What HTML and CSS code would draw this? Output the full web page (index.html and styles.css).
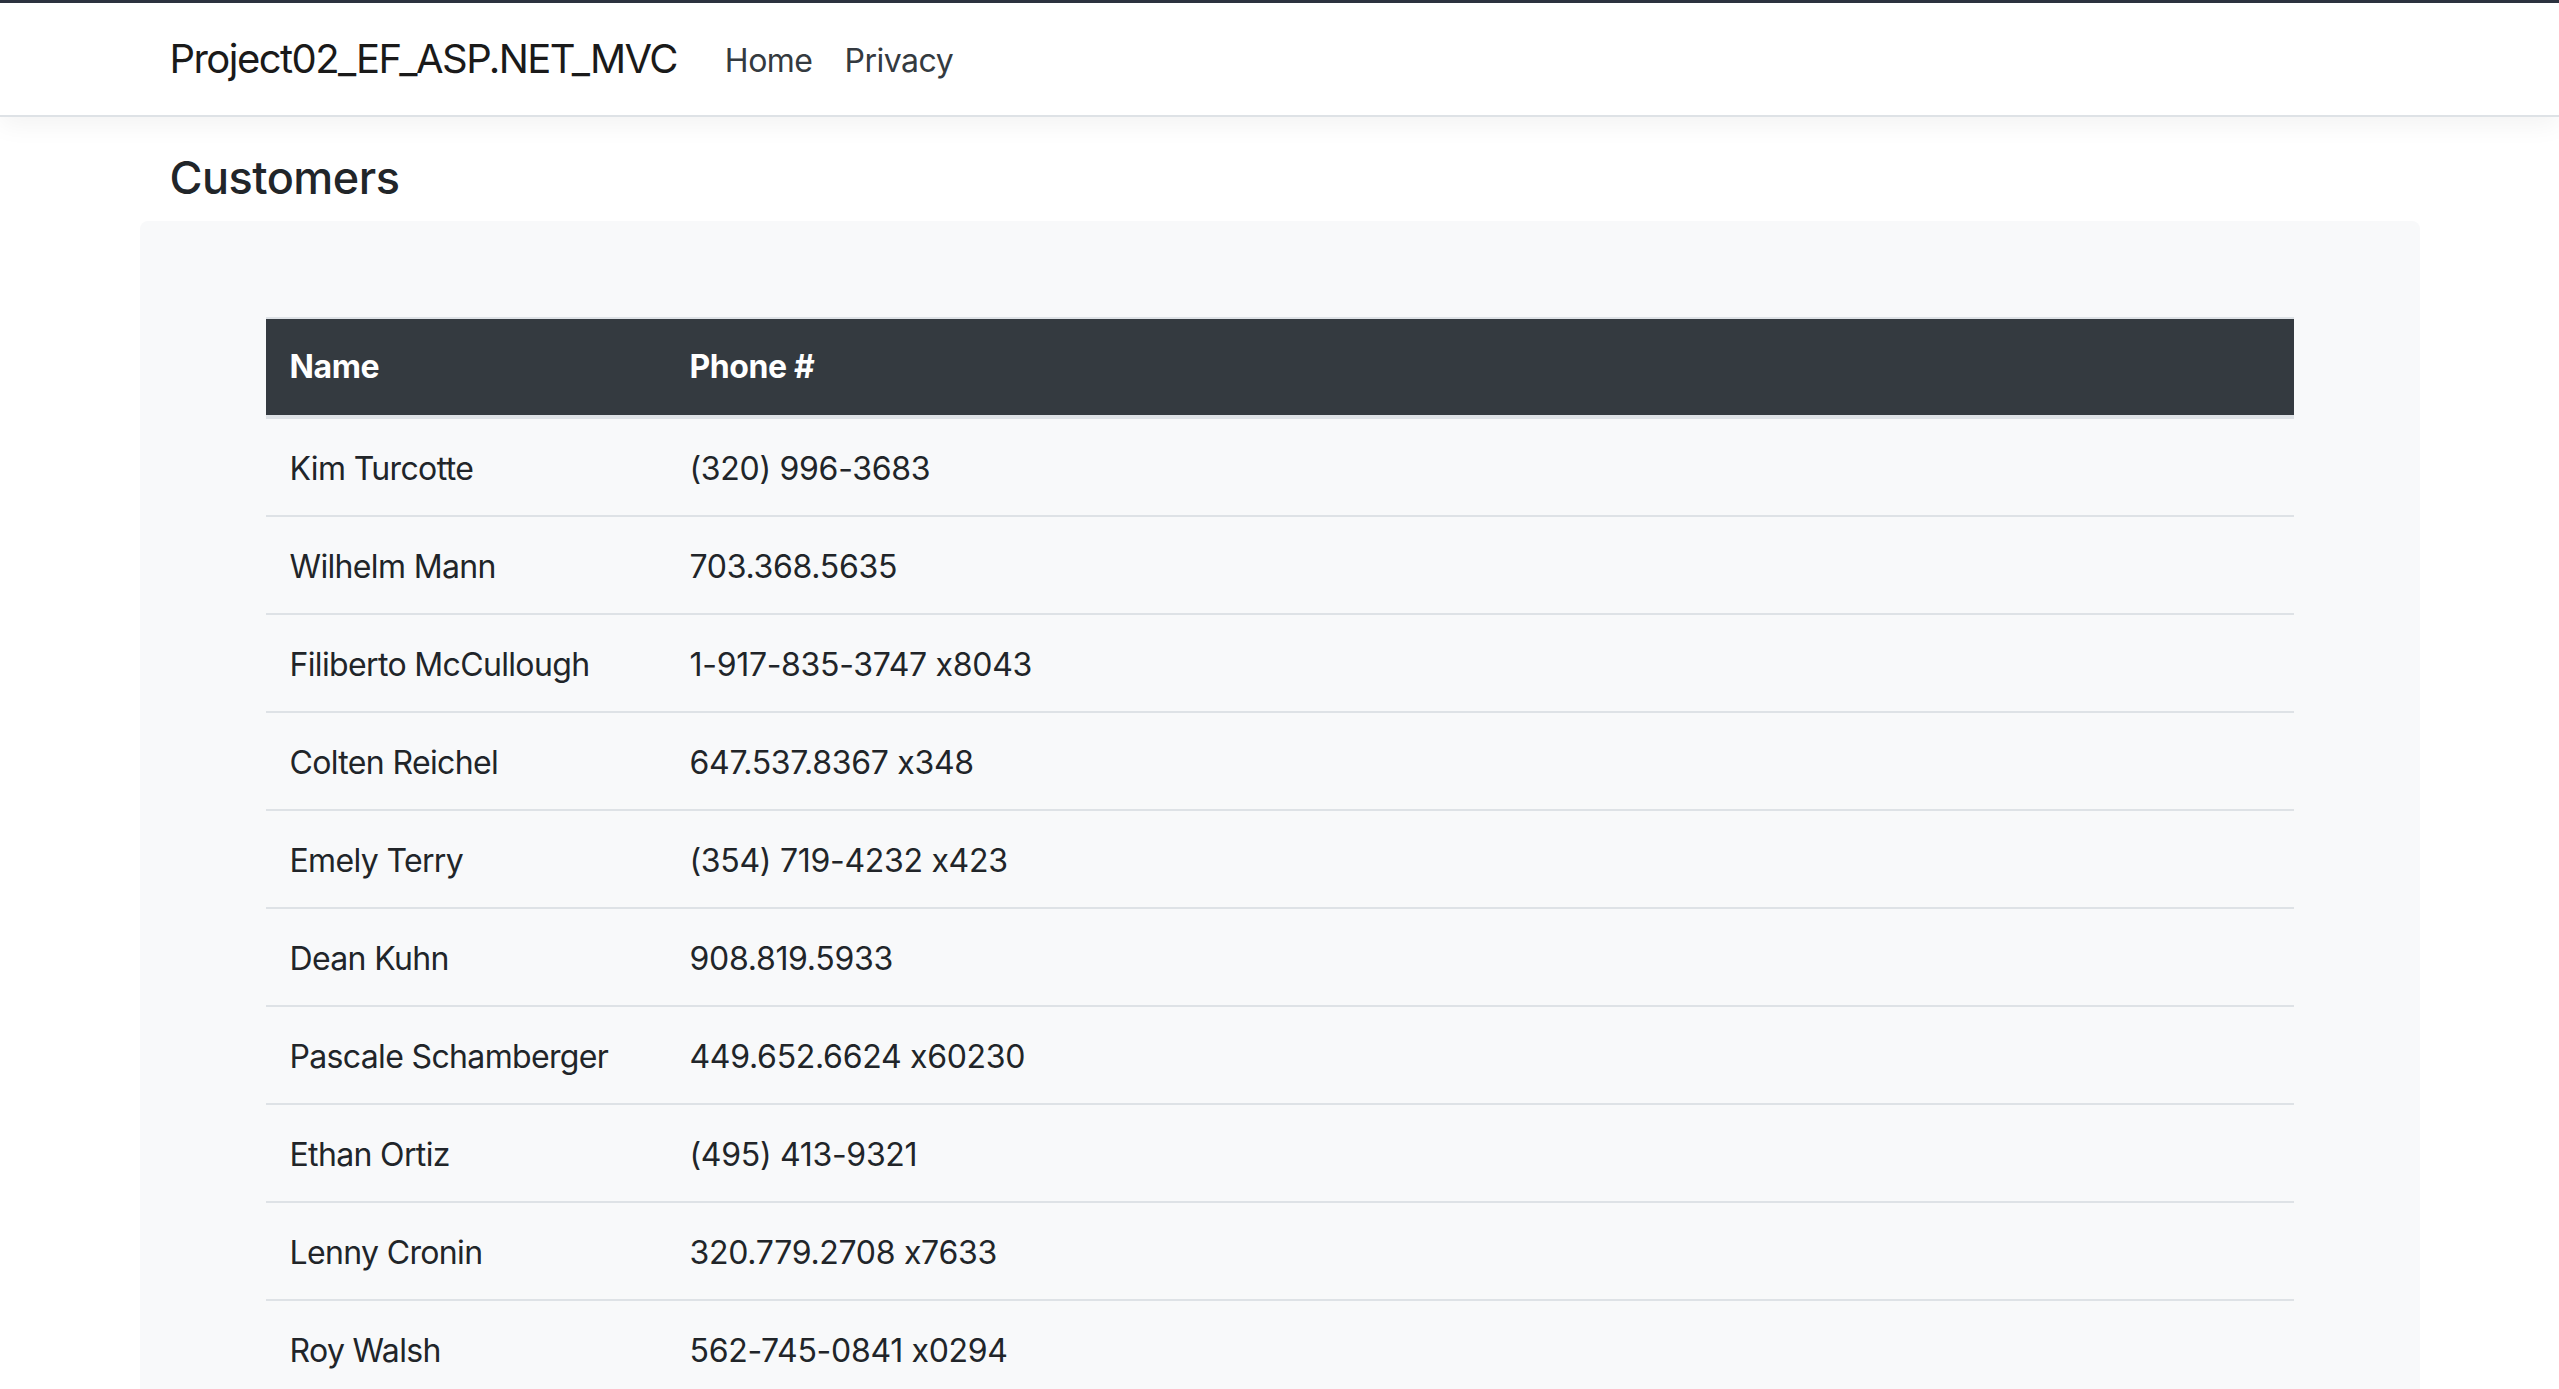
FILE: index.html
```html
<!DOCTYPE html>
<html lang="en">
<head>
<meta charset="utf-8">
<title>Customers - Project02_EF_ASP.NET_MVC</title>
<link rel="stylesheet" href="styles.css">
</head>
<body>
<div class="topline"></div>
<header class="navbar">
  <div class="container nav-inner">
    <a class="brand" href="#">Project02_EF_ASP.NET_MVC</a>
    <nav class="nav">
      <a class="nav-link" href="#">Home</a>
      <a class="nav-link" href="#">Privacy</a>
    </nav>
  </div>
</header>
<div class="container">
  <h1 class="page-title">Customers</h1>
</div>
<section class="panel">
  <table class="table">
    <thead>
      <tr><th class="col-name">Name</th><th>Phone #</th></tr>
    </thead>
    <tbody>
      <tr><td class="name">Kim Turcotte</td><td>(320) 996-3683</td></tr>
      <tr><td class="name">Wilhelm Mann</td><td>703.368.5635</td></tr>
      <tr><td class="name">Filiberto McCullough</td><td>1-917-835-3747 x8043</td></tr>
      <tr><td class="name">Colten Reichel</td><td>647.537.8367 x348</td></tr>
      <tr><td class="name">Emely Terry</td><td>(354) 719-4232 x423</td></tr>
      <tr><td class="name">Dean Kuhn</td><td>908.819.5933</td></tr>
      <tr><td class="name">Pascale Schamberger</td><td>449.652.6624 x60230</td></tr>
      <tr><td class="name">Ethan Ortiz</td><td>(495) 413-9321</td></tr>
      <tr><td class="name">Lenny Cronin</td><td>320.779.2708 x7633</td></tr>
      <tr><td class="name">Roy Walsh</td><td>562-745-0841 x0294</td></tr>
    </tbody>
  </table>
</section>
</body>
</html>
```
FILE: styles.css
```css
html {
  overflow: hidden;
}
body {
  margin: 0;
  background: #ffffff;
  color: #212529;
  font-family: Inter, "Liberation Sans", sans-serif;
  font-size: 32px;
}
.topline {
  height: 3px;
  background: #2d3340;
}
.navbar {
  background: #ffffff;
  border-bottom: 2px solid #dee2e6;
  box-shadow: 0 8px 24px rgba(0, 0, 0, 0.05);
  position: relative;
}
.container {
  width: 2280px;
  margin: 0 auto;
  padding: 0 30px;
  box-sizing: border-box;
}
.nav-inner {
  display: flex;
  align-items: center;
  padding-top: 16px;
  padding-bottom: 16px;
}
.brand {
  font-size: 40px;
  line-height: 60px;
  padding: 10px 0;
  margin-right: 32px;
  color: #1a1a1a;
  text-decoration: none;
  letter-spacing: -1.55px;
}
.nav {
  display: flex;
}
.nav-link {
  padding: 18px 16px 14px;
  line-height: 48px;
  font-size: 32px;
  color: #343a40;
  text-decoration: none;
  letter-spacing: -0.5px;
}
.page-title {
  margin: 31px 0 13px;
  font-size: 45px;
  line-height: 60px;
  font-weight: 500;
  letter-spacing: -0.5px;
}
.panel {
  width: 2280px;
  margin: 0 auto;
  box-sizing: border-box;
  background: #f8f9fa;
  border-radius: 8px;
  padding: 96px 126px;
}
.table {
  width: 100%;
  border-collapse: collapse;
}
.table th,
.table td {
  text-align: left;
  padding: 24px;
  line-height: 48px;
  font-size: 32px;
  letter-spacing: -0.3px;
}
.table th {
  background: #343a40;
  color: #ffffff;
  font-weight: 700;
  border-top: 2px solid #dee2e6;
  border-bottom: 4px solid #dee2e6;
  letter-spacing: -0.4px;
}
.table td {
  border-top: 2px solid #dee2e6;
  font-weight: 400;
  padding-top: 26px;
  padding-bottom: 22px;
}
.table td.name {
  letter-spacing: -0.65px;
}
.col-name {
  width: 352px;
}
```
